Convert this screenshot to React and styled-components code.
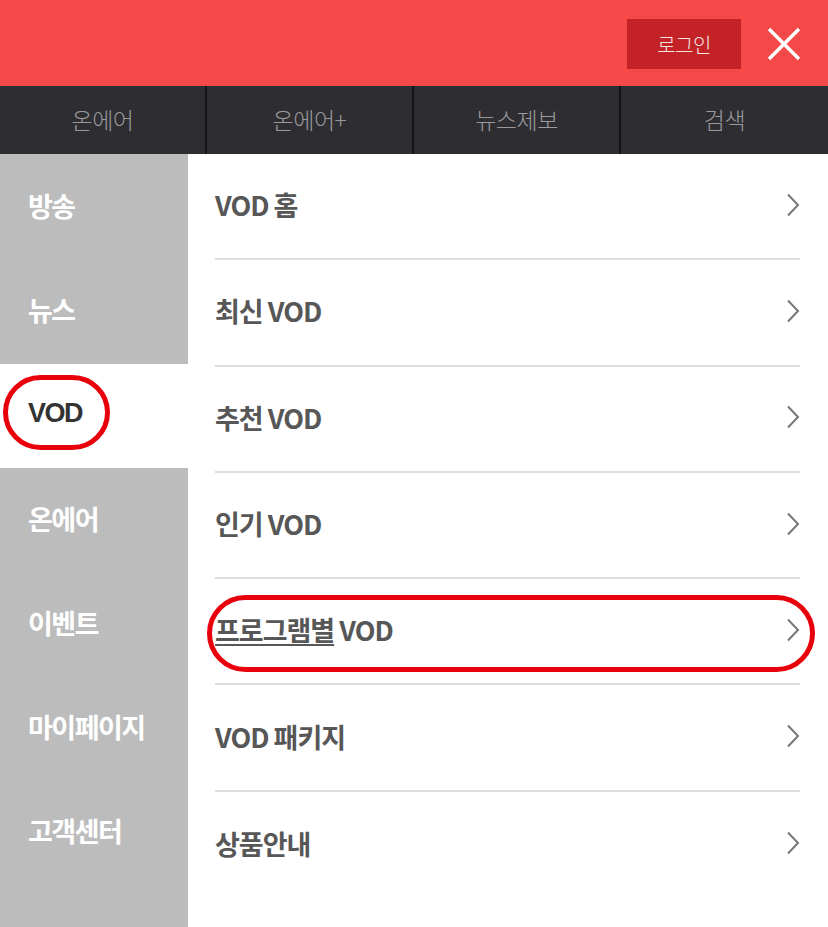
import React from "react";
import styled, { createGlobalStyle } from "styled-components";

const GlobalStyle = createGlobalStyle`
  html, body {
    margin: 0;
    padding: 0;
    background: #fff;
  }
  body {
    font-family: "Noto Sans CJK KR", "Noto Sans", sans-serif;
  }
`;

const tabs = ["온에어", "온에어+", "뉴스제보", "검색"];
const sideItems = ["방송", "뉴스", "VOD", "온에어", "이벤트", "마이페이지", "고객센터"];
const menuItems = [
  { label: "VOD 홈" },
  { label: "최신 VOD" },
  { label: "추천 VOD" },
  { label: "인기 VOD" },
  { label: "프로그램별", suffix: " VOD", marked: true },
  { label: "VOD 패키지" },
  { label: "상품안내" },
];

const Chevron = () => (
  <svg width="14" height="24" viewBox="0 0 14 24" fill="none">
    <polyline points="2,1.5 12,12 2,22.5" stroke="#777" strokeWidth="2" strokeLinejoin="miter" />
  </svg>
);

const App = () => {
  return (
    <Page>
      <GlobalStyle />
      <Header>
        <LoginButton>로그인</LoginButton>
        <CloseButton aria-label="close">
          <svg width="34" height="34" viewBox="0 0 34 34">
            <line x1="2" y1="2" x2="32" y2="32" stroke="#fff" strokeWidth="3.5" />
            <line x1="32" y1="2" x2="2" y2="32" stroke="#fff" strokeWidth="3.5" />
          </svg>
        </CloseButton>
      </Header>
      <TabBar>
        {tabs.map((t) => (
          <Tab key={t}>{t}</Tab>
        ))}
      </TabBar>
      <Body>
        <Sidebar>
          {sideItems.map((s) => (
            <SideItem key={s} $active={s === "VOD"}>
              {s}
              {s === "VOD" && <SideMark />}
            </SideItem>
          ))}
        </Sidebar>
        <Menu>
          {menuItems.map((m, i) => (
            <MenuRow key={m.label} $last={i === menuItems.length - 1}>
              <MenuLabel>
                {m.suffix ? (
                  <>
                    <u>{m.label}</u>
                    {m.suffix}
                  </>
                ) : (
                  m.label
                )}
              </MenuLabel>
              <Chevron />
              {m.marked && <RowMark />}
            </MenuRow>
          ))}
        </Menu>
      </Body>
    </Page>
  );
};

const Page = styled.div`
  width: 828px;
  height: 927px;
  overflow: hidden;
  background: #fff;
`;

const Header = styled.header`
  height: 86px;
  background: #f54949;
  display: flex;
  align-items: center;
  justify-content: flex-end;
  padding-right: 26px;
  box-sizing: border-box;
  gap: 25px;
`;

const LoginButton = styled.button`
  width: 114px;
  height: 50px;
  margin-top: 2px;
  border: none;
  background: #c32326;
  color: #f4e4e4;
  font-family: "Noto Sans CJK KR", sans-serif;
  font-size: 20px;
  font-weight: 300;
  letter-spacing: -0.5px;
  padding: 0;
`;

const CloseButton = styled.button`
  width: 36px;
  height: 36px;
  border: none;
  background: none;
  padding: 0;
  display: flex;
  align-items: center;
  justify-content: center;
  margin-top: 2px;
`;

const TabBar = styled.nav`
  height: 68px;
  background: #2e2e32;
  display: grid;
  grid-template-columns: repeat(4, 1fr);
`;

const Tab = styled.div`
  display: flex;
  align-items: center;
  justify-content: center;
  color: #9a9a9c;
  font-size: 23px;
  font-weight: 300;
  letter-spacing: -0.5px;
  padding-bottom: 2px;
  &:not(:last-child) {
    border-right: 2px solid #141416;
  }
`;

const Body = styled.div`
  display: flex;
  height: 773px;
`;

const Sidebar = styled.aside`
  width: 188px;
  flex-shrink: 0;
  background: #bcbcbc;
  padding-top: 1px;
`;

const SideItem = styled.div`
  position: relative;
  height: 104.3px;
  display: flex;
  align-items: center;
  padding-left: 28px;
  box-sizing: border-box;
  font-size: 27px;
  font-weight: 700;
  letter-spacing: -1.5px;
  padding-bottom: 4px;
  color: ${(p) => (p.$active ? "#333" : "#fff")};
  background: ${(p) => (p.$active ? "#fff" : "transparent")};
  font-family: ${(p) =>
    p.$active ? '"Liberation Sans", "Noto Sans CJK KR", sans-serif' : '"Noto Sans CJK KR", sans-serif'};
`;

const SideMark = styled.span`
  position: absolute;
  left: 3px;
  top: 11px;
  width: 107px;
  height: 75px;
  border: 5px solid #e8000b;
  border-radius: 40px;
  box-sizing: border-box;
`;

const Menu = styled.div`
  flex: 1;
  padding: 0 28px 0 27px;
`;

const MenuRow = styled.div`
  position: relative;
  height: 106.3px;
  box-sizing: border-box;
  display: flex;
  align-items: center;
  justify-content: space-between;
  padding-bottom: 3px;
  border-bottom: ${(p) => (p.$last ? "none" : "2px solid #dcdcdc")};
`;

const MenuLabel = styled.span`
  font-size: 27px;
  font-weight: 700;
  color: #575757;
  letter-spacing: -1px;
  u {
    text-decoration-thickness: 2px;
    text-underline-offset: 3px;
  }
`;

const RowMark = styled.span`
  position: absolute;
  left: -8px;
  right: -15px;
  top: 16px;
  height: 77px;
  border: 5px solid #e8000b;
  border-radius: 40px;
  box-sizing: border-box;
`;

export default App;
